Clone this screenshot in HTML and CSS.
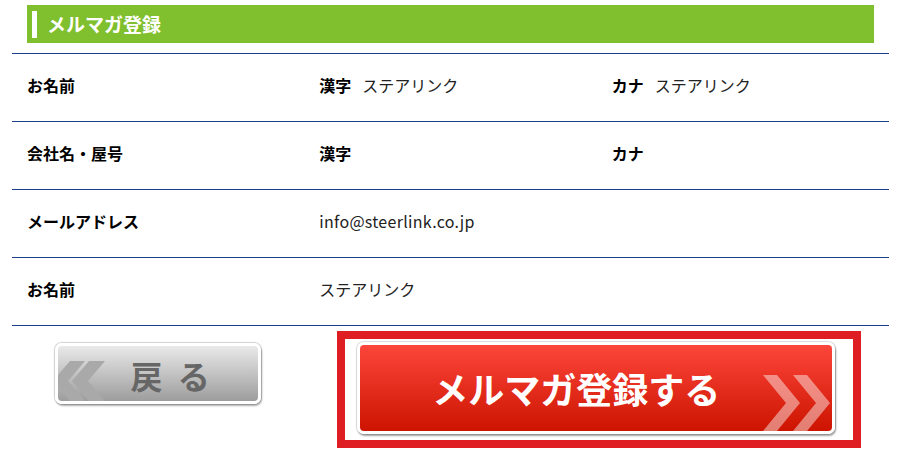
FILE: index.html
```html
<!DOCTYPE html>
<html lang="ja">
<head>
<meta charset="utf-8">
<title>メルマガ登録</title>
<link rel="stylesheet" href="styles.css">
</head>
<body>
<div class="wrap">
  <h2 class="ttl"><span class="ttl-text">メルマガ登録</span></h2>
  <div class="form">
    <div class="row">
      <div class="cell label">お名前</div>
      <div class="cell"><b class="sub">漢字</b>ステアリンク</div>
      <div class="cell"><b class="sub">カナ</b>ステアリンク</div>
    </div>
    <div class="row">
      <div class="cell label">会社名・屋号</div>
      <div class="cell"><b class="sub">漢字</b></div>
      <div class="cell"><b class="sub">カナ</b></div>
    </div>
    <div class="row">
      <div class="cell label">メールアドレス</div>
      <div class="cell span2 email">info@steerlink.co.jp</div>
    </div>
    <div class="row">
      <div class="cell label">お名前</div>
      <div class="cell span2">ステアリンク</div>
    </div>
  </div>
  <div class="actions">
    <div class="back-col">
      <div class="btn-back">
        <svg class="chev" width="200" height="55" viewBox="0 0 200 55">
          <polygon points="12,15 27,15 10,35 27,55 12,55 -5,35" fill="#a9a9a9"/>
          <polygon points="31,15 47,15 30,35 47,55 31,55 14,35" fill="#a9a9a9"/>
        </svg>
        <span class="back-text">戻 る</span>
      </div>
    </div>
    <div class="submit-col">
      <div class="submit-frame">
        <div class="btn-submit">
          <svg class="chev" width="472" height="86" viewBox="0 0 472 86">
            <polygon points="403,30 417,30 440,58 417,86 403,86 426,58" fill="rgba(255,255,255,0.45)"/>
            <polygon points="433,30 447,30 470,58 447,86 433,86 456,58" fill="rgba(255,255,255,0.45)"/>
          </svg>
          <span class="submit-text">メルマガ登録する</span>
        </div>
      </div>
    </div>
  </div>
</div>
</body>
</html>
```

FILE: styles.css
```css
* { box-sizing: border-box; }
html, body {
  margin: 0;
  padding: 0;
  background: #fff;
}
body {
  font-family: "Noto Sans CJK JP", "Noto Sans", sans-serif;
  color: #222;
}
.wrap {
  margin: 0 12px;
  width: 877px;
}
.ttl {
  margin: 5px 15px 10px;
  height: 38px;
  background: #80bf2e;
  display: flex;
  align-items: center;
  padding-left: 5px;
  font-size: 19px;
  font-weight: bold;
  color: #fff;
}
.ttl-text {
  display: block;
  border-left: 5px solid #fff;
  height: 27px;
  line-height: 26px;
  padding-left: 10px;
}
.form {
  border-top: 1px solid #1c3f88;
}
.row {
  display: grid;
  grid-template-columns: repeat(3, 1fr);
  align-items: center;
  height: 68px;
  padding-bottom: 5px;
  border-bottom: 1px solid #1c3f88;
}
.cell {
  padding-left: 15px;
  font-size: 16px;
  line-height: 24px;
  white-space: nowrap;
}
.span2 { grid-column: 2 / 4; }
.email { letter-spacing: 0.3px; }
.label {
  font-weight: bold;
  color: #000;
}
.sub {
  color: #000;
  margin-right: 11px;
}
.actions {
  display: grid;
  grid-template-columns: 1fr 2fr;
}
.back-col {
  display: flex;
  justify-content: center;
  padding-top: 17px;
}
.btn-back {
  position: relative;
  width: 206px;
  height: 61px;
  border: 3px solid #fff;
  border-radius: 7px;
  background: linear-gradient(#e9e9e9, #9d9d9d);
  box-shadow: 0 0 1px 1px rgba(0,0,0,0.18), 1px 2px 2px rgba(0,0,0,0.3);
  overflow: hidden;
  display: flex;
  align-items: center;
  justify-content: center;
  padding: 3px 0 0 24px;
}
.chev {
  position: absolute;
  left: 0;
  top: 0;
}
.back-text {
  position: relative;
  font-size: 32px;
  font-weight: bold;
  color: #666;
  line-height: 1;
  word-spacing: 8px;
}
.submit-col {
  display: flex;
  justify-content: center;
  padding: 5px 0 0 5px;
}
.submit-frame {
  width: 524px;
  height: 117px;
  border: 8px solid #de1e22;
  background: #fff;
  padding: 3px 0 0 12px;
}
.btn-submit {
  position: relative;
  width: 478px;
  height: 92px;
  border: 3px solid #fff;
  border-radius: 7px;
  background: linear-gradient(#fd463b, #cc1400);
  box-shadow: 0 0 1px 1px rgba(0,0,0,0.15), 1px 2px 2px rgba(0,0,0,0.35);
  overflow: hidden;
  display: flex;
  align-items: center;
  justify-content: center;
  padding: 0 40px 0 0;
}
.submit-text {
  position: relative;
  font-size: 36px;
  font-weight: bold;
  color: #fff;
  line-height: 1;
}
```
